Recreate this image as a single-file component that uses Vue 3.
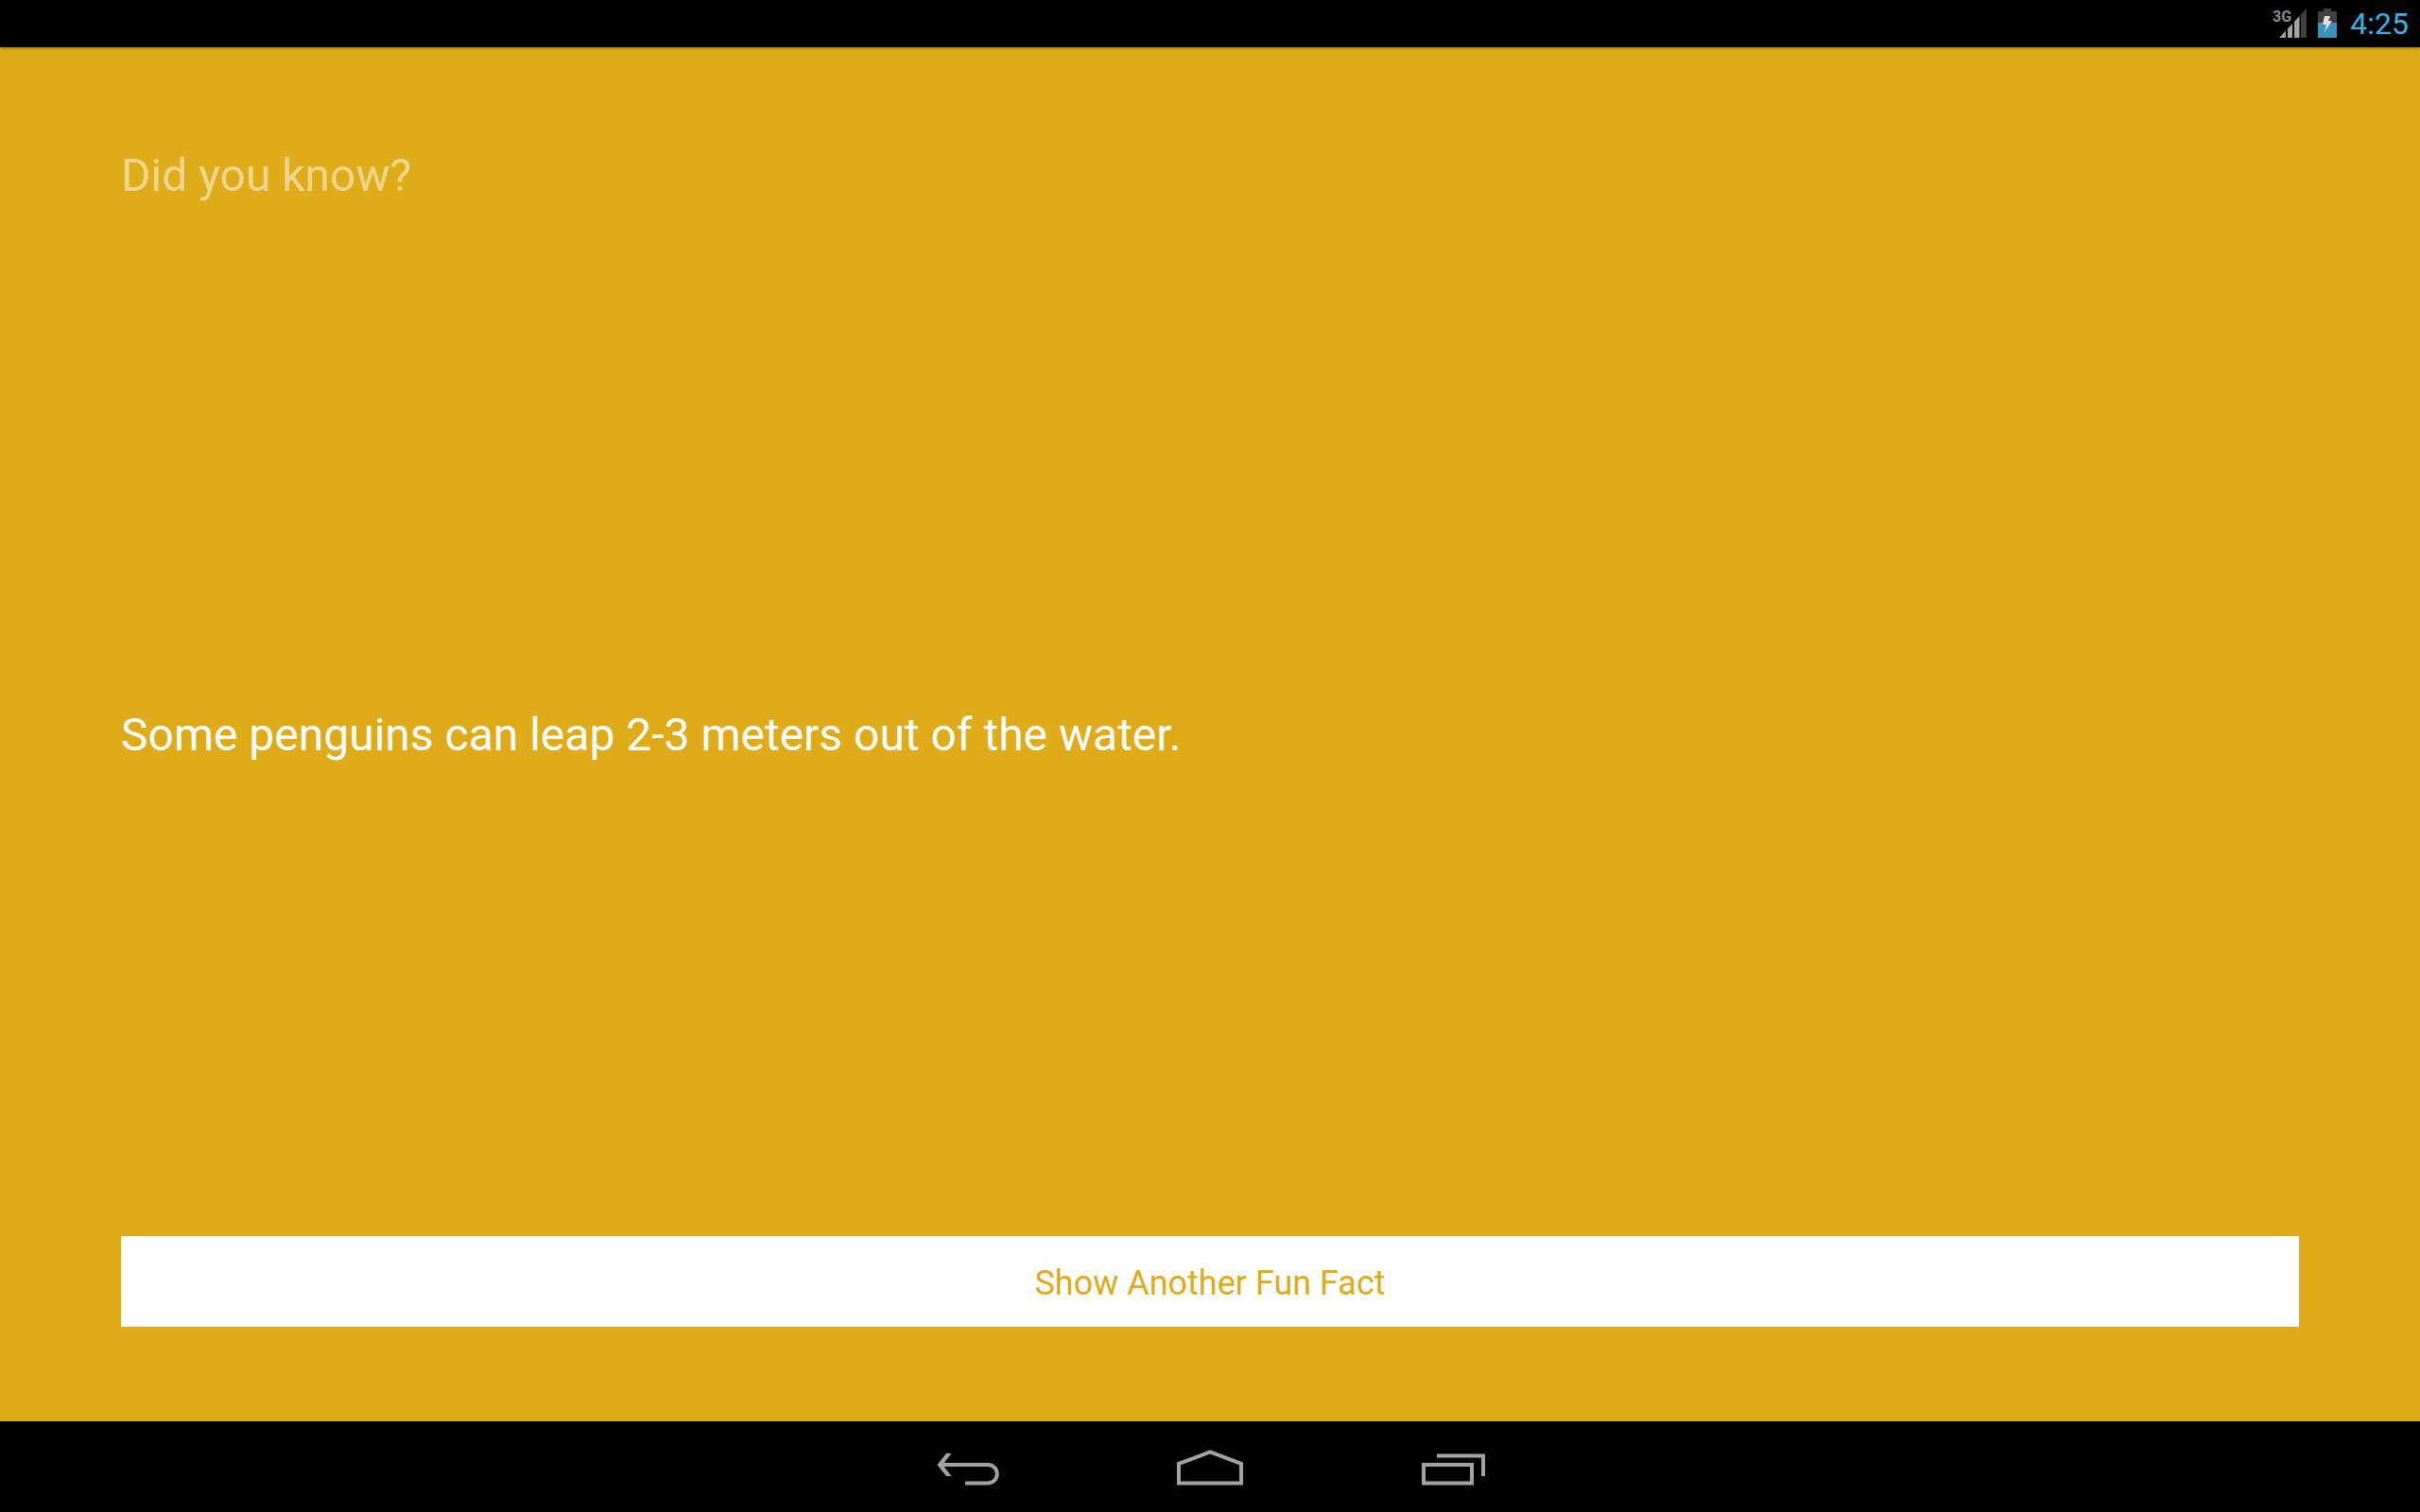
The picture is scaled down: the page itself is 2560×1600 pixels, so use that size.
<script setup>
import { ref } from 'vue'

const facts = [
  'Some penguins can leap 2-3 meters out of the water.',
  'Ants stretch when they wake up in the morning.',
  'Ostriches can run faster than horses.',
]
const index = ref(0)
const showNext = () => {
  index.value = (index.value + 1) % facts.length
}
</script>

<template>
  <div class="screen">
    <header class="status">
      <div class="indicators">
        <svg width="36" height="32" viewBox="0 0 36 32" role="img" aria-label="3G signal">
          <path d="M36 0V31H30V6.400Z" fill="#3f3f3f" />
          <path d="M7 31L14 23.500V31ZM16 21.400L21 16V31H16ZM23 14L28.500 8V31H23Z" fill="#a3a3a3" />
          <text x="0" y="14" class="network">3G</text>
        </svg>
        <svg width="20" height="32" viewBox="0 0 20 32" role="img" aria-label="Battery charging">
          <path d="M6 0H14V3H20V15H0V3H6Z" fill="#404040" />
          <path d="M0 15H20V31H0Z" fill="#3a94b8" />
          <path d="M7 8H13L11 13H15L7 25L9 17H5Z" fill="#dedede" />
        </svg>
      </div>
      <time class="clock">4:25</time>
    </header>

    <main class="content">
      <h1 class="title">Did you know?</h1>
      <p class="fact">{{ facts[index] }}</p>
      <button class="next" type="button" @click="showNext">Show Another Fun Fact</button>
    </main>

    <nav class="navbar">
      <button class="key" type="button" aria-label="Back">
        <svg width="96" height="96" viewBox="0 0 96 96" fill="none" stroke="#a3a3a3" stroke-width="4">
          <path d="M21 46H69A9.500 9.500 0 0 1 69 65.500H45" />
          <path d="M25 34H30.500L21 46L30.500 58H25L15.500 46Z" fill="#a3a3a3" stroke="none" />
        </svg>
      </button>
      <button class="key" type="button" aria-label="Home">
        <svg width="96" height="96" viewBox="0 0 96 96" fill="none" stroke="#a3a3a3" stroke-width="4">
          <path d="M15 65.500V45L48 32.500L81 45V65.500Z" />
        </svg>
      </button>
      <button class="key" type="button" aria-label="Recent apps">
        <svg width="96" height="96" viewBox="0 0 96 96" fill="none" stroke="#a3a3a3" stroke-width="4">
          <path d="M18 46H69V65.500H18ZM32 36.500H81V58" />
        </svg>
      </button>
    </nav>
  </div>
</template>

<style>
body {
  margin: 0;
  background: #000;
}
</style>

<style scoped>
.screen {
  display: flex;
  flex-direction: column;
  min-height: 100vh;
  font-family: Roboto, "Noto Sans", sans-serif;
  background: #dfab18;
}

.status {
  display: flex;
  justify-content: flex-end;
  align-items: center;
  gap: 14px;
  height: 50px;
  padding-right: 12px;
  background: #000;
  box-shadow: 0 0 4px rgba(0, 0, 0, 0.6);
}

.indicators {
  display: flex;
  gap: 12px;
}

.network {
  font-size: 16px;
  font-weight: 700;
  fill: #8a8a8a;
}

.clock {
  font-size: 32px;
  line-height: 40px;
  color: #33b5e5;
}

.content {
  flex: 1;
  display: grid;
  grid-template-rows: 1fr auto 1fr;
  padding: 102px 128px 100px;
}

.title,
.fact {
  margin: 0;
  font-size: 48px;
  font-weight: 400;
  line-height: 68px;
}

.title {
  color: rgba(255, 255, 255, 0.5);
}

.fact {
  color: #fff;
}

.next {
  align-self: end;
  height: 96px;
  border: 0;
  padding: 4px 0 0;
  background: #fff;
  color: #dfab18;
  font-family: inherit;
  font-size: 36px;
}

.navbar {
  display: flex;
  justify-content: center;
  gap: 160px;
  height: 96px;
  background: #000;
}

.key {
  display: flex;
  border: 0;
  padding: 0;
  background: none;
}
</style>
